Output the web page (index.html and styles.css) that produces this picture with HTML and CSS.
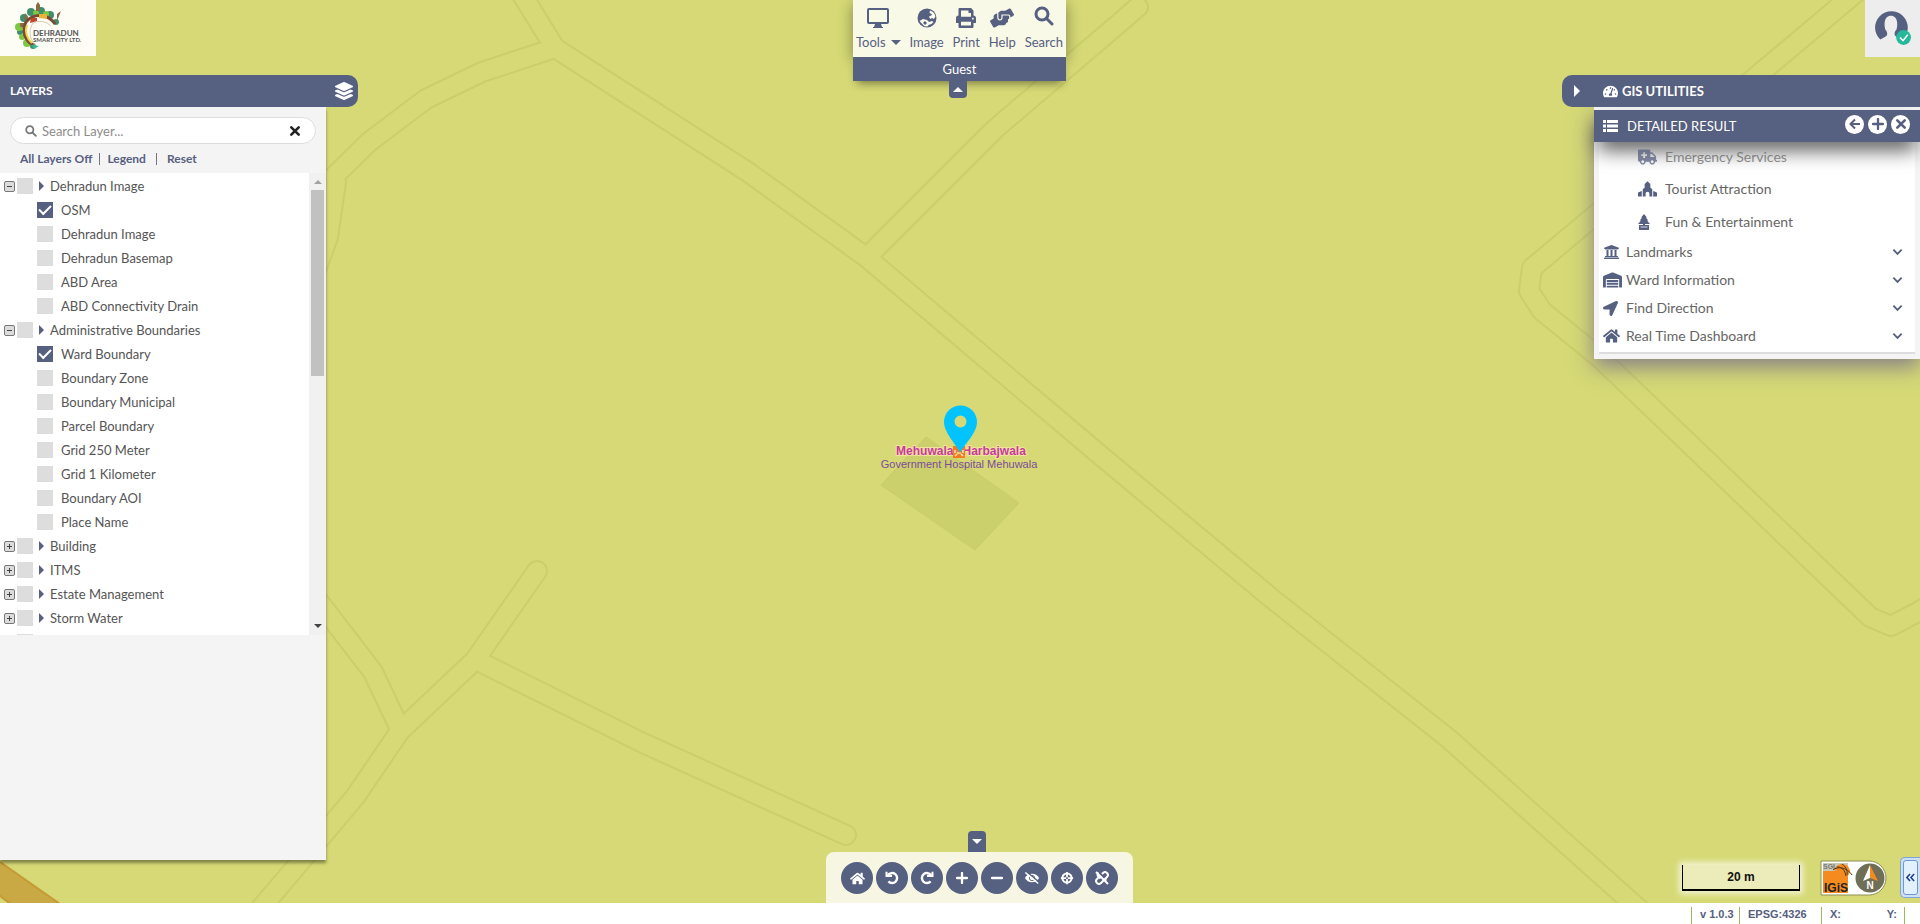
FILE: index.html
```html
<!DOCTYPE html>
<html lang="en">
<head>
<meta charset="utf-8">
<title>Dehradun Smart City GIS</title>
<link rel="stylesheet" href="styles.css">
</head>
<body>
<svg class="defs" aria-hidden="true">
  <symbol id="home" viewBox="0 0 576 512"><path d="M280.37 148.26L96 300.11V464a16 16 0 0 0 16 16l112.06-.29a16 16 0 0 0 15.92-16V368a16 16 0 0 1 16-16h64a16 16 0 0 1 16 16v95.64a16 16 0 0 0 16 16.05L464 480a16 16 0 0 0 16-16V300L295.67 148.26a12.19 12.19 0 0 0-15.3 0zM571.6 251.47L488 182.56V44.05a12 12 0 0 0-12-12h-56a12 12 0 0 0-12 12v72.61L318.47 43a48 48 0 0 0-61 0L4.34 251.47a12 12 0 0 0-1.6 16.9l25.5 31A12 12 0 0 0 45.15 301l235.22-193.74a12.19 12.19 0 0 1 15.3 0L530.9 301a12 12 0 0 0 16.9-1.6l25.5-31a12 12 0 0 0-1.7-16.93z"/></symbol>
  <symbol id="arrow" viewBox="0 0 512 512"><path d="M444.52 3.52L28.74 195.42c-47.97 22.39-31.98 92.75 19.19 92.75h175.91v175.91c0 51.17 70.36 67.17 92.75 19.19l191.9-415.78c15.99-38.39-25.59-79.97-63.97-63.97z"/></symbol>
  <symbol id="layers" viewBox="0 0 512 512"><path d="M12.41 148.02l232.94 105.67c6.8 3.09 14.49 3.09 21.29 0l232.94-105.67c16.55-7.51 16.55-32.52 0-40.03L266.65 2.31a25.6 25.6 0 0 0-21.29 0L12.41 107.98c-16.55 7.51-16.55 32.53 0 40.04zm487.18 88.28l-58.09-26.33-161.64 73.27c-7.56 3.43-15.59 5.17-23.86 5.17s-16.29-1.74-23.86-5.17L70.51 209.97l-58.1 26.33c-16.55 7.5-16.55 32.5 0 40l232.94 105.59c6.8 3.08 14.49 3.08 21.29 0L499.59 276.3c16.55-7.5 16.55-32.5 0-40zm0 127.8l-57.87-26.23-161.86 73.37c-7.56 3.43-15.59 5.17-23.86 5.17s-16.29-1.74-23.86-5.17L70.29 337.87 12.41 364.1c-16.55 7.5-16.55 32.5 0 40l232.94 105.59c6.8 3.08 14.49 3.08 21.29 0L499.59 404.1c16.55-7.5 16.55-32.5 0-40z"/></symbol>
  <symbol id="print" viewBox="0 0 512 512"><path d="M448 192V77.25c0-8.49-3.37-16.62-9.37-22.63L393.37 9.37c-6-6-14.14-9.37-22.63-9.37H96C78.33 0 64 14.33 64 32v160c-35.35 0-64 28.65-64 64v112c0 8.84 7.16 16 16 16h48v96c0 17.67 14.33 32 32 32h320c17.67 0 32-14.33 32-32v-96h48c8.84 0 16-7.16 16-16V256c0-35.35-28.65-64-64-64zm-64 256H128v-96h256v96zm0-224H128V64h192v48c0 8.84 7.16 16 16 16h48v96zm48 72c-13.25 0-24-10.75-24-24 0-13.26 10.75-24 24-24s24 10.74 24 24c0 13.25-10.75 24-24 24z"/></symbol>
  <symbol id="hands" viewBox="0 0 640 512"><path d="M488 192H336v56c0 39.7-32.3 72-72 72s-72-32.3-72-72V126.4l-64.9 39C107.8 176.9 96 197.8 96 220.2v47.3l-80 46.2C.7 322.5-4.6 342.1 4.3 357.4l80 138.6c8.8 15.3 28.4 20.5 43.7 11.7L231.4 448H368c35.3 0 64-28.7 64-64h16c17.7 0 32-14.3 32-32v-64h8c13.3 0 24-10.7 24-24v-48c0-13.3-10.7-24-24-24zm147.7-37.4L555.7 16C546.9.7 527.3-4.5 512 4.3L408.6 64H306.4c-12 0-23.7 3.4-33.9 9.7L239 94.6c-9.4 5.8-15 16.1-15 27.1V248c0 22.1 17.9 40 40 40s40-17.9 40-40v-88h184c30.9 0 56 25.1 56 56v28.5l80-46.2c15.3-8.9 20.5-28.4 11.7-43.7z"/></symbol>
  <symbol id="gauge" viewBox="0 0 576 512"><path d="M288 32C128.94 32 0 160.94 0 320c0 52.8 14.25 102.26 39.06 144.8 5.61 9.62 16.3 15.2 27.44 15.2h443c11.14 0 21.83-5.58 27.44-15.2C561.75 422.26 576 372.8 576 320c0-159.06-128.94-288-288-288zm0 64c14.71 0 26.58 10.13 30.32 23.65-1.11 2.26-2.64 4.23-3.45 6.67l-9.22 27.67c-5.13 3.49-10.97 6.01-17.64 6.01-17.67 0-32-14.33-32-32S270.33 96 288 96zM96 384c-17.67 0-32-14.33-32-32s14.33-32 32-32 32 14.33 32 32-14.33 32-32 32zm48-160c-17.67 0-32-14.33-32-32s14.33-32 32-32 32 14.33 32 32-14.33 32-32 32zm246.77-72.41l-61.33 184C343.13 347.33 352 364.54 352 384c0 11.72-3.38 22.55-8.88 32H232.88c-5.5-9.45-8.88-20.28-8.88-32 0-33.94 26.5-61.43 59.9-63.59l61.34-184.01c4.17-12.56 17.73-19.45 30.36-15.17 12.57 4.19 19.35 17.79 15.17 30.36zm14.66 57.2l15.52-46.55c3.47-1.29 7.13-2.23 11.05-2.23 17.67 0 32 14.33 32 32s-14.33 32-32 32c-11.38-.01-20.89-6.28-26.57-15.22zM480 384c-17.67 0-32-14.33-32-32s14.33-32 32-32 32 14.33 32 32-14.33 32-32 32z"/></symbol>
  <symbol id="worship" viewBox="0 0 640 512"><path d="M620.61 366.55L512 320v192h112c8.84 0 16-7.16 16-16V395.96a32 32 0 0 0-19.39-29.41zM0 395.96V496c0 8.84 7.16 16 16 16h112V320L19.39 366.55A32 32 0 0 0 0 395.96zm464.46-149.28L416 217.6V102.63c0-8.49-3.37-16.62-9.38-22.63L331.31 4.69c-6.25-6.25-16.38-6.25-22.62 0L233.38 80c-6 6-9.38 14.14-9.38 22.63V217.6l-48.46 29.08A32 32 0 0 0 160 274.12V512h96v-96c0-35.35 28.66-64 64-64s64 28.65 64 64v96h96V274.12c0-11.24-5.9-21.66-15.54-27.44z"/></symbol>
  <symbol id="warehouse" viewBox="0 0 640 512"><path d="M504 352H136.4c-4.4 0-8 3.6-8 8l-.1 48c0 4.4 3.6 8 8 8H504c4.4 0 8-3.6 8-8v-48c0-4.4-3.6-8-8-8zm0 96H136.1c-4.4 0-8 3.6-8 8l-.1 48c0 4.4 3.6 8 8 8h368c4.4 0 8-3.6 8-8v-48c0-4.4-3.6-8-8-8zm0-192H136.6c-4.4 0-8 3.6-8 8l-.1 48c0 4.4 3.6 8 8 8H504c4.4 0 8-3.6 8-8v-48c0-4.4-3.6-8-8-8zm106.5-139L338.4 3.7a48.15 48.15 0 0 0-36.9 0L29.5 117C11.7 124.5 0 141.9 0 161.3V504c0 4.4 3.6 8 8 8h80c4.4 0 8-3.6 8-8V256c0-17.6 14.6-32 32.6-32h382.8c18 0 32.6 14.4 32.6 32v248c0 4.4 3.6 8 8 8h80c4.4 0 8-3.6 8-8V161.3c0-19.4-11.7-36.8-29.5-44.3z"/></symbol>
  <symbol id="landmark" viewBox="0 0 512 512"><path d="M496 128v16a8 8 0 0 1-8 8h-24v12c0 6.627-5.373 12-12 12H60c-6.627 0-12-5.373-12-12v-12H24a8 8 0 0 1-8-8v-16a8 8 0 0 1 4.941-7.392l232-88a7.996 7.996 0 0 1 6.118 0l232 88A8 8 0 0 1 496 128zm-24 304H40c-13.255 0-24 10.745-24 24v16a8 8 0 0 0 8 8h464a8 8 0 0 0 8-8v-16c0-13.255-10.745-24-24-24zM96 192v192H60c-6.627 0-12 5.373-12 12v20h416v-20c0-6.627-5.373-12-12-12h-36V192h-64v192h-64V192h-64v192h-64V192H96z"/></symbol>
  <symbol id="ambulance" viewBox="0 0 640 512"><path d="M624 352h-16V243.900c0-12.7-5.1-24.9-14.1-33.9L494 110.100c-9-9-21.2-14.1-33.9-14.1H416V48c0-26.5-21.5-48-48-48H48C21.500 0 0 21.500 0 48v320c0 26.500 21.500 48 48 48h16c0 53 43 96 96 96s96-43 96-96h128c0 53 43 96 96 96s96-43 96-96h48c8.800 0 16-7.200 16-16v-32c0-8.800-7.200-16-16-16zM160 464c-26.500 0-48-21.500-48-48s21.500-48 48-48 48 21.500 48 48-21.500 48-48 48zm144-248c0 4.400-3.600 8-8 8h-56v56c0 4.400-3.600 8-8 8h-48c-4.400 0-8-3.600-8-8v-56h-56c-4.400 0-8-3.600-8-8v-48c0-4.400 3.600-8 8-8h56v-56c0-4.400 3.600-8 8-8h48c4.400 0 8 3.600 8 8v56h56c4.400 0 8 3.600 8 8v48zm176 248c-26.500 0-48-21.500-48-48s21.500-48 48-48 48 21.500 48 48-21.500 48-48 48zm80-208H416V144h44.100l99.900 99.900V256z"/></symbol>
  <symbol id="tree" viewBox="0 0 12 16"><path d="M6 0 9 3.500H7.800L10.300 6.500H9L12 10H7v1h4v5H1v-5h4v-1H0l3-3.500H1.700L4.200 3.500H3z"/><path d="M2.500 13h7" stroke="#aab0c4" stroke-width="1.500"/></symbol>
  <symbol id="list" viewBox="0 0 15 12"><path d="M0 0h3v3H0zM4 0h11v3H4zM0 4.500h3v3H0zM4 4.500h11v3H4zM0 9h3v3H0zM4 9h11v3H4z"/></symbol>
  <symbol id="desktop" viewBox="0 0 24 22"><path d="M3 1h18a2 2 0 0 1 2 2v12a2 2 0 0 1-2 2h-6l1 3h1v1H7v-1h1l1-3H3a2 2 0 0 1-2-2V3a2 2 0 0 1 2-2zm0 2v12h18V3z"/></symbol>
  <symbol id="globe" viewBox="0 0 20 20"><circle cx="10" cy="10" r="9.500"/><path d="M13 2.500c3 1 5 3 5.400 6L17 11l-2-1-1.500 1-1.500-2 1.500-2-1-2zM2.500 13 6 11l4 1 2 2 3-1 1.500 1-2 2-3 1-1 1.500-3-.3-2-2z" fill="#fbfbea"/><path d="m12 5 3 1-1 2-2-1zM8 13l2 2-2 2-2-2z"/></symbol>
  <symbol id="search" viewBox="0 0 20 20"><g fill="none" stroke="currentColor" stroke-width="3"><circle cx="8" cy="8" r="6"/><path d="m12.500 12.500 5.500 5.500" stroke-linecap="round"/></g></symbol>
  <symbol id="times" viewBox="0 0 12 12"><path d="m2.300 2.300 7.400 7.400m0-7.400-7.400 7.400" fill="none" stroke="currentColor" stroke-width="2.600" stroke-linecap="round"/></symbol>
  <symbol id="plus" viewBox="0 0 12 12"><path d="M6 1v10M1 6h10" fill="none" stroke="currentColor" stroke-width="2.300" stroke-linecap="round"/></symbol>
  <symbol id="minus" viewBox="0 0 12 12"><path d="M1 6h10" fill="none" stroke="currentColor" stroke-width="2.300" stroke-linecap="round"/></symbol>
  <symbol id="back" viewBox="0 0 12 12"><path d="M6 1.500 1.500 6 6 10.500M2 6h9" fill="none" stroke="currentColor" stroke-width="2"/></symbol>
  <symbol id="undo" viewBox="0 0 14 14"><path d="M3 4.200a5 5 0 1 1 .4 6.200" fill="none" stroke="currentColor" stroke-width="2.400"/><path d="M.5.800h2l.2 3H7v2.200H.5z"/></symbol>
  <symbol id="chev" viewBox="0 0 12 8"><path d="m1.500 1.500 4.500 4.500 4.500-4.500" fill="none" stroke="currentColor" stroke-width="2"/></symbol>
  <symbol id="eyeoff" viewBox="0 0 18 14"><path d="M1 7C4 .6 14 .6 17 7 14 13.400 4 13.400 1 7z"/><circle cx="9" cy="7" r="3" fill="none" stroke="#566080"/><path d="M3 0 17.500 12" stroke="#566080" stroke-width="1.600"/><path d="M1.500 .8 16 13.200" stroke="currentColor" stroke-width="1.700"/></symbol>
  <symbol id="cross" viewBox="0 0 16 16"><g fill="none" stroke="currentColor"><circle cx="8" cy="8" r="5.200" stroke-width="2.400"/><path d="M8 1v14M1 8h14" stroke-width="2"/></g><path d="M7 7h2v2H7z" fill="#566080"/></symbol>
  <symbol id="unlink" viewBox="0 0 14 14"><g fill="none" stroke="currentColor" stroke-width="2"><path d="m4 6-2 2a2.800 2.800 0 0 0 4 4l6-6a2.800 2.800 0 0 0-4-4L7 3"/><path d="M5.500 7.500 3 5a2.400 2.400 0 0 1 .5-3.500M1 1l12 12M9 8l2.500 1.500"/></g></symbol>
</svg>

<main class="map">
  <svg class="canvas" viewBox="0 0 1920 903" preserveAspectRatio="xMidYMid slice" aria-label="Map">
    <defs>
      <g id="roads" fill="none" stroke-linecap="round" stroke-linejoin="round">
        <path d="M516-15 555 48 748 172 866 257 1100 455 1270 597 1449 739 1640 910"/>
        <path d="M555 48 482 72 426 99 369 142 320 190M336 182 328 237 312 281"/>
        <path d="M868 256 995 129 1110 31 1138 7"/>
        <path d="M1865-15 1758 75 1593 217 1532 268 1529 291 1542 311 1600 358 1870 617 1891 626 1916 613 1935 602"/>
        <path d="M537 571 475 660 400 731 355 797 301 861 255 915M478 661 643 743 846 835M310 590 373 672 400 729"/>
      </g>
    </defs>
    <use href="#roads" class="road-edge"/>
    <use href="#roads" class="road"/>
    <path class="block" d="M926 437 881 485 975 550 1019 503z"/>
    <path class="highway" d="M-20 848 70 911 20 911-20 881z"/>
    <g class="place">
      <text x="961" y="455" text-anchor="middle" class="ward">Mehuwala&#8199;&#8201;Harbajwala</text>
      <path d="M953 446h12v12h-12z" fill="#f57a20"/>
      <path d="M955 456l2-2M963 456l-2-2M955 450v3M963 450v3M957 453h4" stroke="#ffe8b0" stroke-width="1.500"/>
      <text x="959" y="468" text-anchor="middle" class="poi">Government Hospital Mehuwala</text>
      <path fill="#00c3ff" fill-rule="evenodd" d="M960 453c-3-8-16-20-16-31a16 16 0 0 1 33 0c0 11-13 23-17 31zm.5-37.500a6 6 0 1 0 0 12 6 6 0 0 0 0-12z"/>
    </g>
  </svg>

  <a class="brand" href="#">
    <svg viewBox="0 0 96 56" role="img" aria-label="Dehradun Smart City Ltd.">
      <g fill="#3f8f6d"><circle cx="24" cy="18" r="4"/><circle cx="31" cy="12" r="4"/><circle cx="41" cy="11" r="4"/><circle cx="50" cy="15" r="4"/><circle cx="56" cy="22" r="3"/><circle cx="20" cy="32" r="3"/><circle cx="33" cy="46" r="3"/></g>
      <g fill="#7cc843"><circle cx="19" cy="27" r="4"/><circle cx="22" cy="37" r="3"/><circle cx="27" cy="43" r="4"/><circle cx="36" cy="13" r="3"/><circle cx="46" cy="14" r="3"/></g>
      <path d="M36 11V5l2-3 2 3v6zM25 13l3 5-4 2zM57 14l4-3-4 10zM20 23h4v4h-4z" fill="#8a6a45"/>
      <g fill="none">
        <path d="M33 45A17 17 0 0 1 26 22 18 18 0 0 1 55 24" stroke="#7a4a32" stroke-width="3"/>
        <path d="M32 43A16 16 0 0 1 27 25" stroke="#f2d24a" stroke-width="2"/>
        <path d="M38 47A17 17 0 0 1 33 23 15 15 0 0 1 51 26" stroke="#d8ccb0" stroke-width="1"/>
      </g>
      <path d="M39 14h8v5l-8-1z" fill="#e8b33a"/><path d="M31 18h6v3l-7 2z" fill="#c2452d"/>
      <path d="M31 45l8 1-5 3z" fill="#39b89a"/>
      <text x="33" y="36" class="brand-a">DEHRADUN</text>
      <text x="33" y="42" class="brand-b">SMART CITY LTD.</text>
    </svg>
  </a>

  <nav class="tools">
    <div class="tools-menu">
      <button type="button"><svg class="i24"><use href="#desktop"/></svg><span class="drop">Tools</span></button>
      <button type="button"><svg class="i20"><use href="#globe"/></svg>Image</button>
      <button type="button"><svg class="i20"><use href="#print"/></svg>Print</button>
      <button type="button"><svg class="i24"><use href="#hands"/></svg>Help</button>
      <button type="button"><svg class="i20 lift"><use href="#search"/></svg>Search</button>
    </div>
    <div class="guest">Guest</div>
    <button type="button" class="tab tab-top" aria-label="Hide toolbar"><i class="up"></i></button>
  </nav>

  <button type="button" class="user" aria-label="Account">
    <svg viewBox="0 0 36 36"><path d="M6 29a15.500 15.500 0 1 1 21 0L21 26c-2-1-2-4 0-6 1-2 2-9-1-12-2-2-6-2-8 0-3 3-2 10-1 12 2 2 2 5 0 6z" fill="#566080"/><circle cx="28" cy="27" r="7" fill="#25b89a"/><path d="m24.500 27 3 3 4.500-5.500" fill="none" stroke="#fff" stroke-width="1.500"/></svg>
  </button>

  <section class="layers">
    <header><h2>LAYERS</h2><svg class="i18"><use href="#layers"/></svg></header>
    <div class="layers-body">
      <div class="find">
        <svg class="i12"><use href="#search"/></svg>
        <input type="text" placeholder="Search Layer..." aria-label="Search Layer">
        <button type="button" aria-label="Clear"><svg class="i12"><use href="#times"/></svg></button>
      </div>
      <div class="links"><a href="#">All Layers Off</a><i></i><a href="#">Legend</a><i class="wide"></i><a href="#">Reset</a></div>
      <div class="tree">
        <ul>
          <li class="group"><button type="button" class="exp" aria-label="Collapse"></button><label><input type="checkbox"><b></b>Dehradun Image</label></li>
          <li><label><input type="checkbox" checked>OSM</label></li>
          <li><label><input type="checkbox">Dehradun Image</label></li>
          <li><label><input type="checkbox">Dehradun Basemap</label></li>
          <li><label><input type="checkbox">ABD Area</label></li>
          <li><label><input type="checkbox">ABD Connectivity Drain</label></li>
          <li class="group"><button type="button" class="exp" aria-label="Collapse"></button><label><input type="checkbox"><b></b>Administrative Boundaries</label></li>
          <li><label><input type="checkbox" checked>Ward Boundary</label></li>
          <li><label><input type="checkbox">Boundary Zone</label></li>
          <li><label><input type="checkbox">Boundary Municipal</label></li>
          <li><label><input type="checkbox">Parcel Boundary</label></li>
          <li><label><input type="checkbox">Grid 250 Meter</label></li>
          <li><label><input type="checkbox">Grid 1 Kilometer</label></li>
          <li><label><input type="checkbox">Boundary AOI</label></li>
          <li><label><input type="checkbox">Place Name</label></li>
          <li class="group"><button type="button" class="exp more" aria-label="Expand"></button><label><input type="checkbox"><b></b>Building</label></li>
          <li class="group"><button type="button" class="exp more" aria-label="Expand"></button><label><input type="checkbox"><b></b>ITMS</label></li>
          <li class="group"><button type="button" class="exp more" aria-label="Expand"></button><label><input type="checkbox"><b></b>Estate Management</label></li>
          <li class="group"><button type="button" class="exp more" aria-label="Expand"></button><label><input type="checkbox"><b></b>Storm Water</label></li>
          <li class="group"><button type="button" class="exp more" aria-label="Expand"></button><label><input type="checkbox" aria-label="Next group"></label></li>
        </ul>
        <div class="bar"><i class="up"></i><span></span><i class="down"></i></div>
      </div>
    </div>
  </section>

  <section class="gis">
    <header class="gis-head"><i class="right"></i><svg class="i15"><use href="#gauge"/></svg><h2>GIS UTILITIES</h2></header>
    <div class="result">
      <header><svg class="list"><use href="#list"/></svg><h3>DETAILED RESULT</h3>
        <button type="button" aria-label="Back"><svg class="i12"><use href="#back"/></svg></button>
        <button type="button" aria-label="Add"><svg class="i12"><use href="#plus"/></svg></button>
        <button type="button" aria-label="Close"><svg class="i12"><use href="#times"/></svg></button>
      </header>
      <ul>
        <li class="sub fade"><svg><use href="#ambulance"/></svg><a href="#">Emergency Services</a></li>
        <li class="sub"><svg><use href="#worship"/></svg><a href="#">Tourist Attraction</a></li>
        <li class="sub"><svg class="slim"><use href="#tree"/></svg><a href="#">Fun &amp; Entertainment</a></li>
        <li><svg class="i17"><use href="#landmark"/></svg><a href="#">Landmarks</a><svg class="chev"><use href="#chev"/></svg></li>
        <li><svg><use href="#warehouse"/></svg><a href="#">Ward Information</a><svg class="chev"><use href="#chev"/></svg></li>
        <li><svg class="i15"><use href="#arrow"/></svg><a href="#">Find Direction</a><svg class="chev"><use href="#chev"/></svg></li>
        <li><svg class="i17"><use href="#home"/></svg><a href="#">Real Time Dashboard</a><svg class="chev"><use href="#chev"/></svg></li>
      </ul>
    </div>
  </section>

  <div class="nav">
    <button type="button" class="tab tab-bottom" aria-label="Hide navigation"><i class="down"></i></button>
    <div class="nav-bar">
      <button type="button" aria-label="Home"><svg class="i15"><use href="#home"/></svg></button>
      <button type="button" aria-label="Previous"><svg class="i14"><use href="#undo"/></svg></button>
      <button type="button" aria-label="Next"><svg class="i14 flip"><use href="#undo"/></svg></button>
      <button type="button" aria-label="Zoom in"><svg class="i12"><use href="#plus"/></svg></button>
      <button type="button" aria-label="Zoom out"><svg class="i12"><use href="#minus"/></svg></button>
      <button type="button" aria-label="Hide layers"><svg class="i16"><use href="#eyeoff"/></svg></button>
      <button type="button" aria-label="Locate"><svg class="i14"><use href="#cross"/></svg></button>
      <button type="button" aria-label="Unlink"><svg class="i14"><use href="#unlink"/></svg></button>
    </div>
  </div>

  <div class="corner">
    <div class="scale">20 m</div>
    <svg class="igis" viewBox="0 0 68 36" role="img" aria-label="IGiS">
      <path d="M1 1h48a17 17 0 0 1 0 34H1z" fill="#fff" stroke="#8d9054"/>
      <path d="M3 3h25v9H3z" fill="#c9c9b8"/><path d="M3 11h25v22H3z" fill="#f58a1f"/>
      <text x="3" y="9" class="sgl">SGL</text><text x="4" y="32" class="ig">IGiS</text>
      <path d="M14 10c2-7 14-9 16 1 0 3-2 5-5 6-2-3-6-6-11-7z" fill="#f58a1f"/><path d="M13 10c4-4 14-3 19 5M17 7c5 0 8 3 9 9M22 4c3 2 6 6 5 11" fill="none" stroke="#4a3a20"/>
      <circle cx="50" cy="18" r="14.500" fill="#6f6e57"/><path d="M50 5 43 21l7-3z" fill="#fff"/><path d="m50 5 8 16-8-3z" fill="#f58a1f"/>
      <text x="50" y="29" text-anchor="middle" class="n">N</text>
    </svg>
    <button type="button" class="open" aria-label="Open overview"><svg viewBox="0 0 10 10"><path d="M4.500 1 1 5l3.500 4M9 1 5.500 5 9 9" fill="none" stroke="currentColor" stroke-width="1.700"/></svg></button>
  </div>
</main>
<footer class="status">
  <span class="ver">v 1.0.3</span><span class="epsg">EPSG:4326</span><span class="xy"><span>X:</span><span>Y:</span></span>
</footer>
</body>
</html>
```
FILE: styles.css
```css
* { box-sizing: border-box; }
body { margin: 0; height: 100vh; display: flex; flex-direction: column; overflow: hidden; font: 13px/16px Lato, "Liberation Sans", sans-serif; color: #555; background: #fff; }
button { font: inherit; color: inherit; border: 0; background: none; padding: 0; }
a { color: inherit; text-decoration: none; }
ul { list-style: none; margin: 0; padding: 0; }
h2, h3 { margin: 0; font-size: 13px; line-height: 16px; font-weight: 700; }
svg { fill: currentColor; flex: none; display: block; }
.defs { position: absolute; width: 0; height: 0; }
.i12 { width: 12px; height: 12px; }
.i14 { width: 14px; height: 14px; }
.i15 { width: 15px; height: 15px; }
.i16 { width: 16px; height: 16px; }
.i17 { width: 17px; height: 16px; }
.i18 { width: 18px; height: 18px; }
.i20 { width: 20px; height: 20px; }
.i24 { width: 24px; height: 22px; }

.map { flex: 1; min-height: 0; position: relative; background: #d6d975; overflow: hidden; }
.canvas { width: 100%; height: 100%; }
.road-edge { stroke: #cbcf69; stroke-width: 22px; }
.road { stroke: #d6d975; stroke-width: 18px; }
.block { fill: #ccd06c; stroke: #c9cc68; }
.highway { fill: #c8a943; stroke: #c69a35; stroke-width: 2px; }
.ward { font: bold 12px "Liberation Sans", sans-serif; fill: #c43c9c; stroke: #f6e2a0; stroke-width: 2px; paint-order: stroke; }
.poi { font: 11px "Liberation Sans", sans-serif; fill: #7c4b9c; }

.brand { position: absolute; left: 0; top: 0; width: 96px; height: 56px; background: #fdfdf5; }
.brand-a, .brand-b { font: bold 8px Lato, sans-serif; fill: #555; }
.brand-b { font-size: 6px; }

.tools { position: absolute; top: 0; left: 50%; margin-left: -107px; width: 213px; display: flex; flex-direction: column; align-items: center; color: #566080; }
.tools-menu { width: 100%; height: 57px; display: flex; justify-content: space-between; padding: 6px 3px 0; background: #f9f9e8; box-shadow: 0 4px 14px #0006; }
.tools-menu button { display: flex; flex-direction: column; align-items: center; gap: 4px; }
.tools-menu svg { height: 24px; }
.tools-menu .lift { height: 20px; margin-bottom: 4px; }
.drop { display: flex; align-items: center; gap: 5px; }
.drop::after { content: ""; border: 5px solid transparent; border-top-color: #566080; border-bottom: 0; }
.guest { width: 100%; height: 24px; background: #566080; color: #fff; text-align: center; line-height: 24px; position: relative; box-shadow: 0 6px 10px -4px #0007; }
.tab { width: 18px; background: #566080; display: flex; align-items: center; justify-content: center; }
.tab-top { height: 17px; border-radius: 0 0 4px 4px; margin-right: 3px; position: relative; }
.up, .down { width: 0; height: 0; border: 4px solid transparent; }
.up { border-bottom-color: #fff; border-top: 0; }
.down { border-top-color: #fff; border-bottom: 0; }
.tab .up { border-width: 0 5px 5px; }
.tab .down { border-width: 5px 5px 0; }

.user { position: absolute; right: 0; top: 0; width: 55px; height: 57px; background: #ededed; display: flex; padding: 9px 0 0 9px; }
.user svg { width: 38px; height: 38px; }

.layers { position: absolute; left: 0; top: 75px; bottom: 43px; width: 358px; display: flex; flex-direction: column; align-items: flex-start; }
.layers > header { width: 100%; height: 32px; flex: none; display: flex; align-items: center; justify-content: space-between; padding: 0 5px 0 10px; background: #566080; color: #fff; border-radius: 0 10px 10px 0; }
.layers h2 { font-size: 12px; }
.layers-body { width: 326px; flex: 1; background: #f4f4f4; box-shadow: 0 3px 3px #0006; }
.find { margin: 10px 10px 0; height: 27px; display: flex; align-items: center; gap: 5px; padding: 0 14px; background: #fff; border: 1px solid #ddd; border-radius: 14px; color: #777; }
.find input { flex: 1; min-width: 0; border: 0; outline: 0; padding: 0; background: none; font: inherit; color: #555; }
.find ::placeholder { color: #8c8c8c; opacity: 1; }
.find button { color: #222; }
.links { display: flex; align-items: center; gap: 7px; height: 29px; padding: 0 20px; font-size: 12px; font-weight: 700; color: #566080; }
.links i { width: 1px; height: 12px; background: #777; }
.links .wide { margin: 0 3px; }
.tree { height: 462px; display: flex; background: #fff; overflow: hidden; }
.tree ul { flex: 1; padding-top: 1px; }
.tree li { height: 24px; display: flex; align-items: center; padding-left: 37px; }
.tree .group { padding-left: 4px; gap: 2px; }
.tree label { display: flex; align-items: center; gap: 8px; }
.tree .group label { gap: 6px; }
.tree input { appearance: none; margin: 0; width: 16px; height: 16px; background: #ddd; display: grid; place-items: center; }
.tree input:checked { background: #566080; }
.tree input:checked::after { content: ""; width: 10px; height: 5px; border: solid #fff; border-width: 0 0 2px 2px; transform: rotate(-45deg); margin-bottom: 3px; }
.tree b { border: 5px solid transparent; border-left-color: #566080; border-right: 0; }
.exp { width: 11px; height: 11px; border: 1px solid #777; border-radius: 2px; background: linear-gradient(#444, #444) center / 5px 1px no-repeat, #dcdcdc; }
.more { background: linear-gradient(#444, #444) center / 5px 1px no-repeat, linear-gradient(#444, #444) center / 1px 5px no-repeat, #dcdcdc; }
.bar { width: 17px; display: flex; flex-direction: column; align-items: center; background: #f1f1f1; padding: 7px 0; }
.bar span { width: 13px; height: 186px; margin-top: 6px; background: #c1c1c1; }
.bar .up { border-bottom-color: #a3a3a3; }
.bar .down { border-top-color: #444; margin-top: auto; }

.gis { position: absolute; right: 0; top: 75px; width: 358px; }
.gis-head { height: 32px; display: flex; align-items: center; gap: 4px; padding-left: 12px; background: #566080; color: #fff; border-radius: 10px 0 0 10px; position: relative; z-index: 1; }
.right { border: 6px solid transparent; border-left-color: #fff; border-right: 0; margin-right: 19px; }
.result { margin-left: 32px; padding: 3px 5px 5px; background: #f4f4f4; box-shadow: 0 8px 20px #6a648cc0; }
.result header { height: 32px; margin: 0 -5px; padding: 0 10px 0 9px; display: flex; align-items: center; gap: 4px; background: #566080; color: #fff; position: relative; box-shadow: 0 12px 20px -4px #000a; }
.result h3 { flex: 1; padding-left: 5px; font-weight: 400; }
.result header button { width: 19px; height: 19px; border-radius: 50%; background: #fff; color: #566080; display: grid; place-items: center; margin-bottom: 4px; }
.list { width: 15px; height: 12px; }
.result ul { background: #fff; border-bottom: 2px solid #ddd; padding: 0 12px 2px 4px; font-size: 14px; }
.result li { min-height: 28px; display: flex; align-items: center; color: #666; }
.result li > svg:first-child { width: 19px; height: 16px; color: #566080; margin-right: 4px; }
.result li > svg.i17:first-child { width: 17px; margin-right: 6px; }
.result li > svg.i15:first-child { width: 15px; height: 15px; margin-right: 8px; }
.result a { flex: 1; }
.result .sub { height: 33px; padding-left: 35px; }
.result .sub > svg:first-child { margin-right: 8px; }
.result .sub > svg.slim:first-child { width: 12px; margin-right: 15px; }
.result .fade { height: 30px; opacity: .75; }
.chev { width: 11px; height: 8px; color: #566080; }

.nav { position: absolute; bottom: 0; left: 50%; margin-left: -134px; display: flex; flex-direction: column; align-items: center; }
.tab-bottom { height: 21px; border-radius: 4px 4px 0 0; margin-right: 6px; }
.nav-bar { height: 51px; display: flex; gap: 3px; padding: 10px 15px; background: #f7f6e2; border-radius: 8px 8px 0 0; }
.nav-bar button { width: 32px; height: 32px; border-radius: 50%; background: #566080; color: #fff; display: grid; place-items: center; }
.flip { transform: scaleX(-1); }

.corner { position: absolute; right: 0; bottom: 5px; display: flex; align-items: center; color: #111; }
.scale { width: 118px; height: 26px; margin-right: 20px; border: 1px solid #000; border-top: 0; border-bottom-width: 2px; background: #ffffff80; box-shadow: 0 0 6px 3px #ffffffb0; text-align: center; font: bold 12px/24px "Liberation Sans", sans-serif; }
.igis { width: 68px; height: 36px; margin-right: 12px; }
.sgl { font: bold 7px "Liberation Sans", sans-serif; fill: #777; }
.ig { font: bold 12px "Liberation Sans", sans-serif; fill: #222; }
.n { font: bold 10px "Liberation Sans", sans-serif; fill: #fff; }
.open { width: 20px; height: 41px; border: 1px solid #7da5d8; border-right: 0; border-radius: 5px 0 0 5px; background: #cfe0f5; padding: 2px; color: #1d3c8c; }
.open svg { width: 15px; height: 35px; padding: 0 2px; border: 1px solid #6c97d4; border-radius: 3px; background: #e3f1ff; }

.status { height: 21px; flex: none; display: flex; justify-content: flex-end; padding: 4px 15px 0 0; font: bold 11px/14px "Liberation Sans", sans-serif; color: #566080; }
.status > span { border-left: 1px solid #9db85c; padding-left: 8px; }
.ver { width: 48px; white-space: nowrap; }
.epsg { width: 82px; }
.status .xy { width: 84px; display: flex; justify-content: space-between; border-right: 1px solid #9db85c; padding-right: 7px; }
```
